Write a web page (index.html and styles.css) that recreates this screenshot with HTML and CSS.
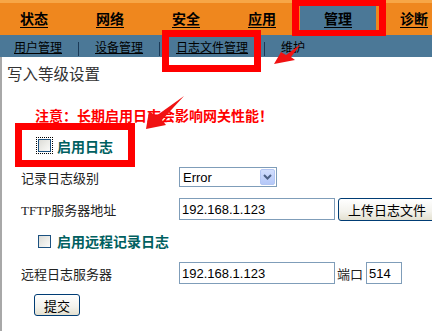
FILE: index.html
```html
<!DOCTYPE html>
<html lang="zh-CN">
<head>
    <meta charset="UTF-8">
    <meta name="viewport" content="width=device-width, initial-scale=1.0">
    <title>日志文件管理</title>
    <link rel="stylesheet" href="styles.css">
</head>
<body>
    <div class="topnav">
        <div class="tabs">
            <a class="tab" href="#"><span>状态</span></a>
            <a class="tab" href="#"><span>网络</span></a>
            <a class="tab" href="#"><span>安全</span></a>
            <a class="tab" href="#"><span>应用</span></a>
            <a class="tab active" href="#"><span>管理</span></a>
            <a class="tab" href="#"><span>诊断</span></a>
        </div>
    </div>
    <div class="subnav">
        <a href="#">用户管理</a><span class="sep"></span>
        <a href="#">设备管理</a><span class="sep"></span>
        <a href="#">日志文件管理</a><span class="sep"></span>
        <a class="plain" href="#">维护</a>
    </div>

    <div class="content">
        <h1 class="title">写入等级设置</h1>
        <p class="warn">注意：长期启用日志会影响网关性能！</p>

        <form id="logForm">
            <div class="check-row first">
                <input type="checkbox" class="cb focused" id="enableLog">
                <label class="opt" for="enableLog">启用日志</label>
            </div>

            <div class="row">
                <label class="lbl">记录日志级别</label>
                <div class="select">
                    <span>Error</span>
                    <span class="select-btn">
                        <svg width="9" height="6" viewBox="0 0 9 6"><path d="M1 1 L4.5 4.5 L8 1" fill="none" stroke="#4d6185" stroke-width="2"/></svg>
                    </span>
                </div>
            </div>

            <div class="row">
                <label class="lbl"><span class="tftp">TFTP</span>服务器地址</label>
                <input type="text" class="input" value="192.168.1.123">
                <button type="button" class="btn upload">上传日志文件</button>
            </div>

            <div class="check-row">
                <input type="checkbox" class="cb" id="remoteLog">
                <label class="opt" for="remoteLog">启用远程记录日志</label>
            </div>

            <div class="row">
                <label class="lbl">远程日志服务器</label>
                <input type="text" class="input" value="192.168.1.123">
                <span class="port-lbl">端口</span>
                <input type="text" class="input port" value="514">
            </div>

            <div class="row submit-row">
                <button type="submit" class="btn submit">提交</button>
            </div>
        </form>
    </div>

    <!-- annotation marks -->
    <div class="mark mark-tab"></div>
    <div class="mark mark-sub"></div>
    <div class="mark mark-cb"></div>
    <svg class="arrows" width="432" height="331" viewBox="0 0 432 331">
        <polygon points="274,64 281,52 286,55 301,44 291,57 295,60" fill="#f01212"/>
        <polygon points="146,129 149,111 156,116 184,96 162,120 166,125" fill="#f01212"/>
    </svg>
</body>
</html>
```

FILE: styles.css
```css
body {
    margin: 0;
    width: 432px;
    height: 331px;
    overflow: hidden;
    position: relative;
    background: #fff;
    font-family: "Liberation Sans", "Noto Sans CJK SC", sans-serif;
}
.topnav {
    height: 32px;
    border-top: 3px solid #f7a646;
    background: #ef871e;
}
.tabs {
    display: flex;
    margin-left: -4px;
}
.tab {
    width: 76px;
    height: 32px;
    flex-shrink: 0;
    display: flex;
    align-items: center;
    justify-content: center;
    font-size: 14px;
    font-weight: bold;
    color: #000;
    text-decoration: none;
}
.tab span {
    line-height: 16px;
    border-bottom: 1px solid #000;
}
.tab.active {
    background: #4b7897;
}
.subnav {
    display: flex;
    align-items: flex-start;
    height: 18px;
    padding: 4px 0 0 14px;
    background: #4b7897;
    font-size: 12px;
    line-height: 18px;
    white-space: nowrap;
}
.subnav a {
    color: #000;
    text-decoration: underline;
}
.subnav a.plain {
    text-decoration: none;
}
.sep {
    width: 1px;
    height: 14px;
    margin: 3px 16px 0;
    background: #1b3a57;
}
.content {
    height: 266px;
    border-left: 2px solid #a8a8a8;
    padding: 8px 0 0 5px;
}
.title {
    margin: 0;
    font-size: 15.5px;
    font-weight: normal;
    line-height: 20px;
    color: #333;
}
.warn {
    margin: 22px 0 0 28px;
    font-size: 14px;
    font-weight: bold;
    line-height: 18px;
    color: #f00;
}
.check-row {
    display: flex;
    align-items: center;
    height: 32px;
    padding-left: 31px;
}
.check-row.first {
    height: 31px;
    margin-top: 5px;
}
.cb {
    appearance: none;
    box-sizing: border-box;
    width: 13px;
    height: 13px;
    margin: 0;
    border: 1px solid #1c5180;
    background: linear-gradient(135deg, #dcdcd7, #fbfbf9);
}
.cb.focused {
    outline: 1px dotted #000;
    outline-offset: 1px;
}
.opt {
    margin-left: 6px;
    font-size: 14px;
    font-weight: bold;
    color: #006060;
}
.row {
    display: flex;
    align-items: center;
    height: 32px;
    padding-left: 14px;
    white-space: nowrap;
}
.lbl {
    width: 158px;
    flex-shrink: 0;
    font-size: 13px;
    color: #222;
}
.tftp {
    font-family: "Liberation Serif", serif;
}
.select {
    box-sizing: border-box;
    width: 98px;
    height: 20px;
    display: flex;
    align-items: center;
    justify-content: space-between;
    padding: 0 1px 0 3px;
    border: 1px solid #7f9db9;
    font-size: 13px;
    color: #000;
}
.select-btn {
    box-sizing: border-box;
    width: 15px;
    height: 16px;
    display: flex;
    align-items: center;
    justify-content: center;
    border: 1px solid #b3c6f3;
    border-radius: 2px;
    background: linear-gradient(#d2defd, #b5c8f8);
}
.input {
    box-sizing: border-box;
    flex-shrink: 0;
    width: 156px;
    height: 22px;
    margin: 0;
    padding: 0 2px;
    border: 1px solid #7f9db9;
    font-family: "Liberation Sans", sans-serif;
    font-size: 13px;
    color: #000;
}
.input.port {
    width: 36px;
    margin-left: 3px;
}
.port-lbl {
    margin-left: 2px;
    font-size: 13px;
    color: #222;
}
.btn {
    flex-shrink: 0;
    box-sizing: border-box;
    height: 23px;
    margin: 0;
    padding: 0 9px;
    border: 1px solid #003c74;
    border-radius: 3px;
    background: linear-gradient(#ffffff, #f3f2ec 60%, #e3e0d0);
    font-family: "Liberation Sans", "Noto Sans CJK SC", sans-serif;
    font-size: 13px;
    color: #000;
}
.btn.upload {
    margin-left: 3px;
}
.submit-row {
    padding-left: 27px;
}
.btn.submit {
    width: 46px;
    height: 22px;
    padding: 0;
}
.mark {
    position: absolute;
    box-sizing: border-box;
    border: 7px solid #f00;
}
.mark-tab {
    left: 292px;
    top: 0;
    width: 94px;
    height: 36px;
    border-width: 6px 7px;
}
.mark-sub {
    left: 162px;
    top: 30px;
    width: 99px;
    height: 42px;
}
.mark-cb {
    left: 15px;
    top: 123px;
    width: 120px;
    height: 44px;
}
.arrows {
    position: absolute;
    left: 0;
    top: 0;
    pointer-events: none;
}
```
